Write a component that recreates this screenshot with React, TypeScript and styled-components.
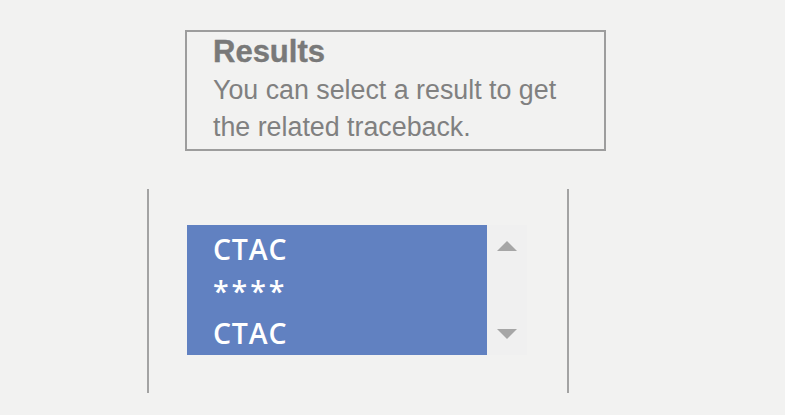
import React from 'react'
import styled, { createGlobalStyle } from 'styled-components'

const GlobalStyle = createGlobalStyle`
  html, body {
    margin: 0;
    padding: 0;
    background: #f2f2f1;
  }
  body {
    width: 785px;
    height: 415px;
    overflow: hidden;
  }
`

const Page = styled.div`
  display: flex;
  flex-direction: column;
  align-items: flex-start;
  padding-top: 30px;
`

const InfoBox = styled.div`
  box-sizing: border-box;
  margin-left: 185px;
  width: 421px;
  height: 121px;
  border: 2px solid #9d9d9d;
  padding: 0 0 0 26px;
  font-family: "Liberation Sans", Arial, sans-serif;
  color: #808080;
`

const Title = styled.div`
  font-size: 31px;
  font-weight: bold;
  line-height: 40px;
  color: #797979;
  -webkit-text-stroke: 0.4px #797979;
`

const Hint = styled.div`
  font-size: 26.8px;
  line-height: 36.5px;
`

const ListPanel = styled.div`
  box-sizing: border-box;
  margin: 38px 0 0 147px;
  width: 422px;
  height: 204px;
  border-left: 2px solid #a3a3a3;
  border-right: 2px solid #a3a3a3;
  padding: 36px 0 0 38px;
  display: flex;
  align-items: flex-start;
`

const ListBox = styled.div`
  box-sizing: border-box;
  width: 300px;
  height: 130px;
  background: #6181c1;
  padding: 3px 0 0 26px;
  display: flex;
  flex-direction: column;
`

const Row = styled.div<{ $stars?: boolean }>`
  font-family: "Open Sans", "Noto Sans", sans-serif;
  font-size: 28.5px;
  font-weight: 600;
  line-height: 42px;
  height: 42px;
  color: #ffffff;
  letter-spacing: ${p => (p.$stars ? '3px' : '0.8px')};
  white-space: nowrap;
`

const ScrollBar = styled.div`
  width: 40px;
  height: 130px;
  background: #f0f0f0;
  display: flex;
  flex-direction: column;
  justify-content: space-between;
  align-items: center;
  padding: 16px 0;
  box-sizing: border-box;
`

const Arrow = styled.div<{ $down?: boolean }>`
  width: 0;
  height: 0;
  border-left: 10px solid transparent;
  border-right: 10px solid transparent;
  ${p =>
    p.$down
      ? 'border-top: 10px solid #a6a6a6;'
      : 'border-bottom: 10px solid #a6a6a6;'}
`

const rows = ['CTAC', '****', 'CTAC']

export default function App() {
  return (
    <>
      <GlobalStyle />
      <Page>
        <InfoBox>
          <Title>Results</Title>
          <Hint>You can select a result to get</Hint>
          <Hint>the related traceback.</Hint>
        </InfoBox>
        <ListPanel>
          <ListBox>
            {rows.map((r, i) => (
              <Row key={i} $stars={r === '****'}>
                {r}
              </Row>
            ))}
          </ListBox>
          <ScrollBar>
            <Arrow />
            <Arrow $down />
          </ScrollBar>
        </ListPanel>
      </Page>
    </>
  )
}
